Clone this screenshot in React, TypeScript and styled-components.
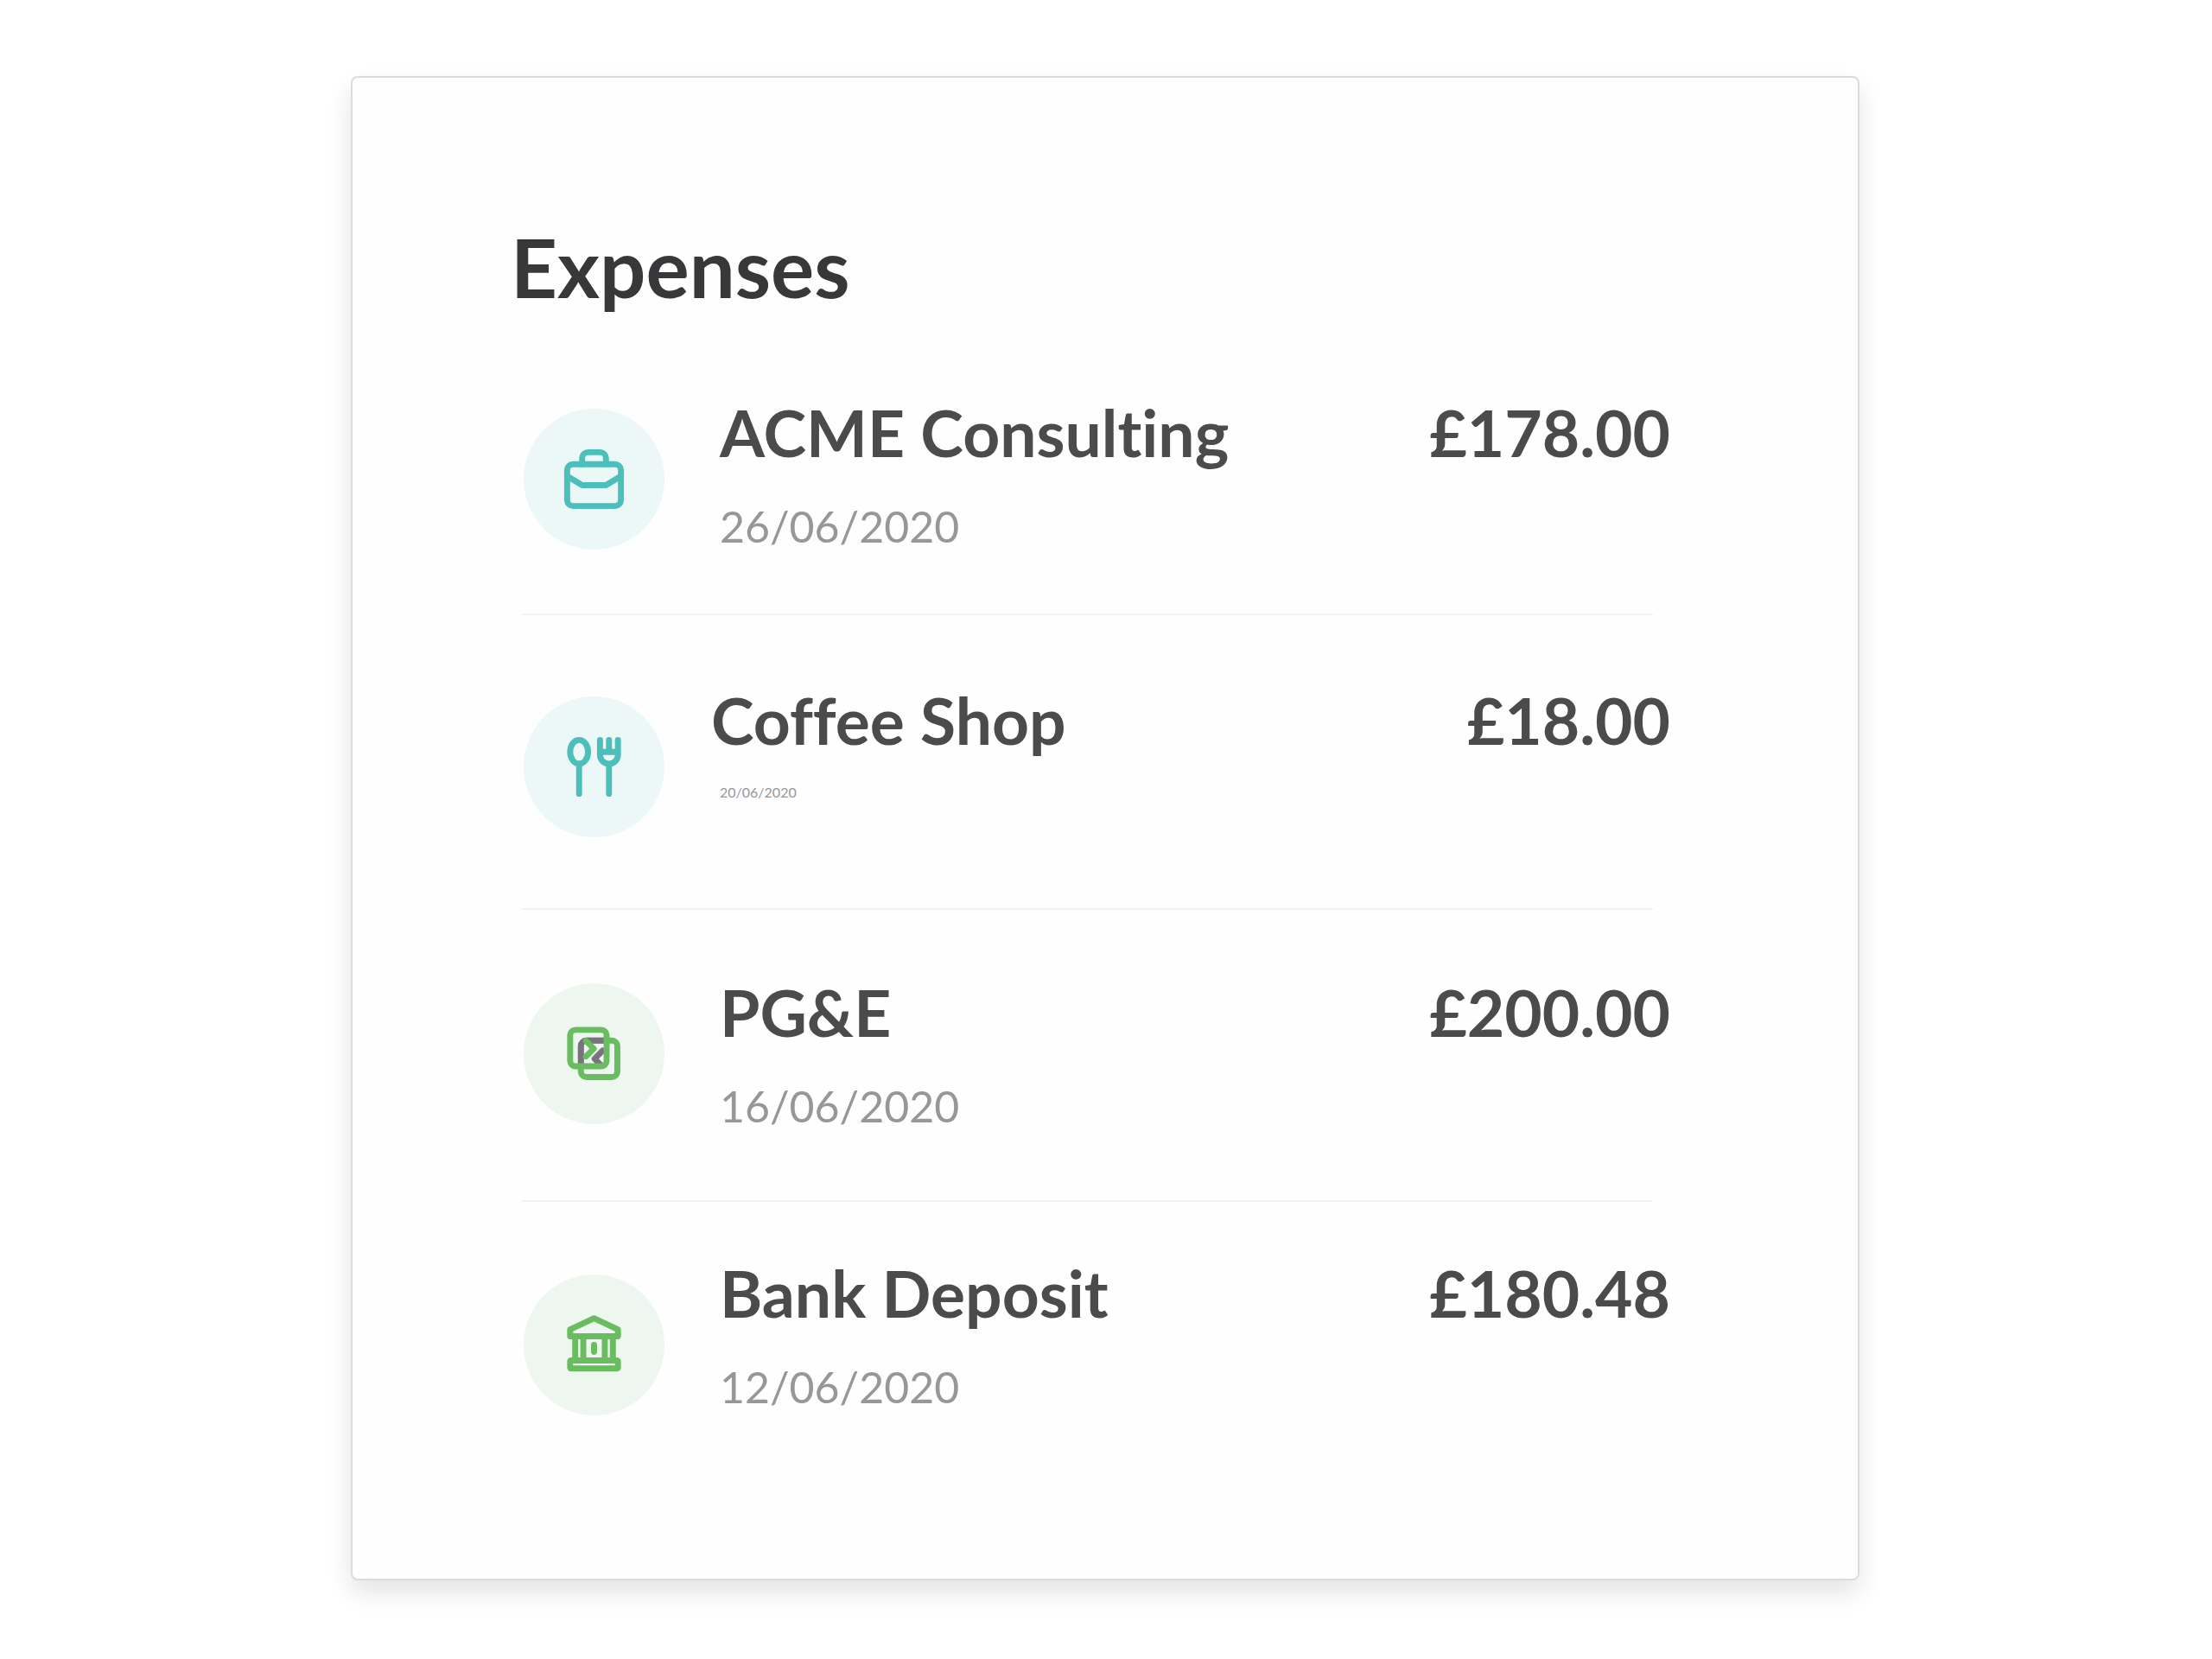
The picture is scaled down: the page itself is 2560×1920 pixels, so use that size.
import React from "react";
import styled, { createGlobalStyle } from "styled-components";

const GlobalStyle = createGlobalStyle`
  *, *::before, *::after { box-sizing: border-box; }
  body {
    margin: 0;
    background: #fff;
    font-family: Lato, "Open Sans", sans-serif;
    font-variant-ligatures: none;
  }
`;

const Page = styled.main`
  padding: 88px 50px 88px 48px;
`;

const Card = styled.section`
  max-width: 1746px;
  margin: 0 auto;
  padding: 165px 217px 189px 183px;
  background: #fefefe;
  border: 2px solid #dcdcdc;
  border-radius: 8px;
  box-shadow: 0 14px 28px rgba(0, 0, 0, 0.11);
`;

const Heading = styled.h1`
  margin: 0 0 93px;
  font-size: 94px;
  line-height: 108px;
  font-weight: 700;
  color: #38383b;
`;

const List = styled.ul`
  margin: 0;
  padding: 0 0 0 12px;
  list-style: none;
`;

const Item = styled.li<{ $top: number; $bottom: number }>`
  padding-top: ${(p) => p.$top}px;

  &:not(:last-child)::after {
    content: "";
    display: block;
    height: 2px;
    margin: ${(p) => p.$bottom}px 20px 0 0;
    background: #f3f3f3;
  }
`;

const Row = styled.div<{ $compact?: boolean }>`
  display: flex;
  align-items: flex-start;
  gap: ${(p) => (p.$compact ? 54 : 64)}px;
  padding-left: 3px;
`;

const Badge = styled.span<{ $tone: Tone; $drop: number }>`
  flex: none;
  display: grid;
  place-items: center;
  width: 163px;
  height: 163px;
  margin-top: ${(p) => p.$drop}px;
  border-radius: 50%;
  color: ${(p) => (p.$tone === "teal" ? "#4cbfbb" : "#69bc5f")};
  background: ${(p) => (p.$tone === "teal" ? "#ecf7f7" : "#eef7ef")};
`;

const Glyph = styled.svg`
  width: 83px;
  height: 83px;
  fill: none;
  stroke: currentColor;
  stroke-width: 2;
  stroke-linecap: round;
  stroke-linejoin: round;
`;

const Details = styled.div`
  flex: 1;
`;

const Name = styled.h2`
  margin: 0;
  font-size: 75px;
  line-height: 88px;
  font-weight: 700;
  color: #4b4b4b;
`;

const DateText = styled.time<{ $compact?: boolean }>`
  display: block;
  margin-top: ${(p) => (p.$compact ? 28 : 36)}px;
  padding-left: ${(p) => (p.$compact ? 10 : 0)}px;
  font-size: ${(p) => (p.$compact ? 16 : 50)}px;
  line-height: ${(p) => (p.$compact ? 24 : 58)}px;
  color: #979797;
`;

const Amount = styled.span`
  font-size: 75px;
  line-height: 88px;
  font-weight: 700;
  color: #4b4b4b;
`;

type Tone = "teal" | "green";

const BriefcaseIcon = () => (
  <Glyph viewBox="0 0 24 24" aria-hidden="true">
    <path d="M8 7V5a2 2 0 0 1 2-2h4a2 2 0 0 1 2 2v2" />
    <rect x="3" y="7" width="18" height="14" rx="2" />
    <path d="M3 11l5 3h8l5-3" />
  </Glyph>
);

const CutleryIcon = () => (
  <Glyph viewBox="0 0 24 24" aria-hidden="true">
    <ellipse cx="7" cy="7" rx="3" ry="4" />
    <path d="M7 11v10" />
    <path d="M14 3v5a3 3 0 0 0 6 0V3M17 3v4M14 7h6M17 11v10" />
  </Glyph>
);

const TransferIcon = () => (
  <Glyph viewBox="0 0 24 24" aria-hidden="true">
    <clipPath id="overlap">
      <rect x="4" y="4" width="12" height="12" />
    </clipPath>
    <rect x="7.6" y="7.6" width="12.2" height="12.2" rx="1.8" />
    <g stroke="#7b7280" clipPath="url(#overlap)">
      <rect x="7.6" y="7.6" width="12.2" height="12.2" rx="1.8" />
      <path d="M14.8 11l-2.6 2.7 2.6 2.6" />
    </g>
    <path d="M9.3 7.7l2.6 2.6-2.6 2.6" />
    <rect x="4" y="4" width="12.2" height="12.2" rx="1.8" />
  </Glyph>
);

const BankIcon = () => (
  <Glyph viewBox="0 0 24 24" aria-hidden="true">
    <path d="M4 9.1V6.8l8-3.7 8 3.7v2.3z" />
    <path d="M5.7 9.1v8.1M8.4 9.1v8.1M15.6 9.1v8.1M18.3 9.1v8.1M12 12v2.3" />
    <rect x="4" y="17.2" width="16" height="2.7" rx="0.3" />
  </Glyph>
);

interface Expense {
  name: string;
  date: string;
  iso: string;
  amount: string;
  tone: Tone;
  Icon: () => React.ReactElement;
  top: number;
  bottom: number;
  drop: number;
  compact?: boolean;
}

const expenses: Expense[] = [
  { name: "ACME Consulting", date: "26/06/2020", iso: "2020-06-26", amount: "£178.00", tone: "teal", Icon: BriefcaseIcon, top: 0, bottom: 72, drop: 17 },
  { name: "Coffee Shop", date: "20/06/2020", iso: "2020-06-20", amount: "£18.00", tone: "teal", Icon: CutleryIcon, top: 77, bottom: 82, drop: 17, compact: true },
  { name: "PG&E", date: "16/06/2020", iso: "2020-06-16", amount: "£200.00", tone: "green", Icon: TransferIcon, top: 74, bottom: 80, drop: 11 },
  { name: "Bank Deposit", date: "12/06/2020", iso: "2020-06-12", amount: "£180.48", tone: "green", Icon: BankIcon, top: 61, bottom: 0, drop: 23 },
];

export default function App() {
  return (
    <>
      <GlobalStyle />
      <Page>
        <Card aria-labelledby="expenses-heading">
          <Heading id="expenses-heading">Expenses</Heading>
          <List>
            {expenses.map(({ name, date, iso, amount, tone, Icon, top, bottom, drop, compact }) => (
              <Item key={iso} $top={top} $bottom={bottom}>
                <Row $compact={compact}>
                  <Badge $tone={tone} $drop={drop}>
                    <Icon />
                  </Badge>
                  <Details>
                    <Name>{name}</Name>
                    <DateText dateTime={iso} $compact={compact}>
                      {date}
                    </DateText>
                  </Details>
                  <Amount>{amount}</Amount>
                </Row>
              </Item>
            ))}
          </List>
        </Card>
      </Page>
    </>
  );
}
